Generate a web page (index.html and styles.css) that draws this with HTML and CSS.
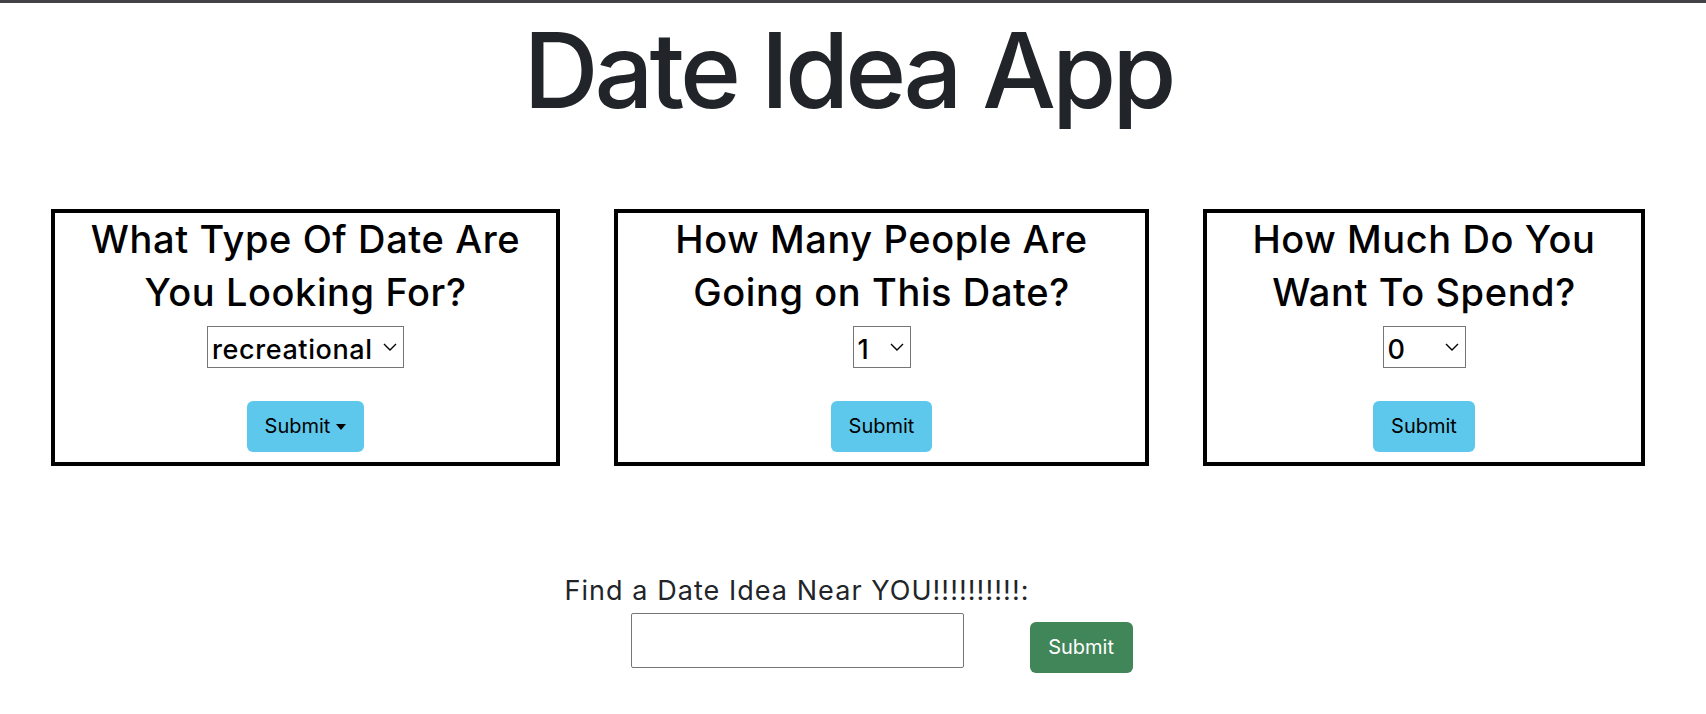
FILE: index.html
```html
<!DOCTYPE html>
<html lang="en">
<head>
<meta charset="utf-8">
<title>Date Idea App</title>
<link rel="stylesheet" href="styles.css">
</head>
<body>
<h1 class="title">Date Idea App</h1>

<div class="cards">
  <div class="card card--type">
    <h2 class="card__title">What Type Of Date Are<br>You Looking For?</h2>
    <span class="select-wrap">
      <select class="select select--type">
        <option>recreational</option>
      </select>
      <svg class="chevron" viewBox="0 0 14 8" width="14" height="8"><path d="M1 1l6 6 6-6" fill="none" stroke="#000" stroke-width="1.4"/></svg>
    </span>
    <button class="btn btn--info">Submit<span class="caret"></span></button>
  </div>

  <div class="card card--people">
    <h2 class="card__title">How Many People Are<br>Going on This Date?</h2>
    <span class="select-wrap">
      <select class="select select--people">
        <option>1</option>
      </select>
      <svg class="chevron" viewBox="0 0 14 8" width="14" height="8"><path d="M1 1l6 6 6-6" fill="none" stroke="#000" stroke-width="1.4"/></svg>
    </span>
    <button class="btn btn--info">Submit</button>
  </div>

  <div class="card card--budget">
    <h2 class="card__title">How Much Do You<br>Want To Spend?</h2>
    <span class="select-wrap">
      <select class="select select--budget">
        <option>0</option>
      </select>
      <svg class="chevron" viewBox="0 0 14 8" width="14" height="8"><path d="M1 1l6 6 6-6" fill="none" stroke="#000" stroke-width="1.4"/></svg>
    </span>
    <button class="btn btn--info">Submit</button>
  </div>
</div>

<form class="search">
  <div class="search__field">
    <label class="search__label" for="loc">Find a Date Idea Near YOU!!!!!!!!!!:</label>
    <input class="search__input" id="loc" type="text">
  </div>
  <button class="btn btn--success" type="button">Submit</button>
</form>
</body>
</html>
```

FILE: styles.css
```css
* { box-sizing: border-box; }

body {
  margin: 0;
  border-top: 3px solid #434345;
  font-family: Inter, "Noto Sans", sans-serif;
  background: #fff;
  color: #212529;
}

.title {
  margin: 5px 0 0;
  padding-right: 10px;
  text-align: center;
  font-size: 104px;
  line-height: 125px;
  font-weight: 500;
  letter-spacing: -4px;
  color: #212529;
}

.cards {
  display: flex;
  gap: 54px;
  padding-left: 51px;
  margin-top: 76px;
}

.card {
  border: 4px solid #000;
  display: flex;
  flex-direction: column;
  align-items: center;
  padding-bottom: 10px;
}

.card--type { width: 509px; }
.card--people { width: 535px; }
.card--budget { width: 442px; }

.card__title {
  margin: 0;
  font-size: 38px;
  line-height: 53px;
  font-weight: 500;
  letter-spacing: 0.6px;
  color: #000;
  text-align: center;
}

.select-wrap {
  position: relative;
  display: inline-block;
  margin-top: 7px;
}

.select {
  appearance: none;
  -webkit-appearance: none;
  display: block;
  height: 42px;
  border: 1px solid #767676;
  border-radius: 0;
  background: #fff;
  color: #000;
  font-family: Inter, "Noto Sans", sans-serif;
  font-size: 27px;
  font-weight: 500;
  letter-spacing: 0.6px;
  padding: 4px 0 0 4px;
  margin: 0;
}

.select--type { width: 197px; }
.select--people { width: 58px; }
.select--budget { width: 83px; }

.chevron {
  position: absolute;
  right: 7px;
  top: 17px;
  pointer-events: none;
}

.btn {
  margin-top: 33px;
  height: 51px;
  border: 0;
  border-radius: 6px;
  font-family: Inter, "Noto Sans", sans-serif;
  font-size: 20px;
  font-weight: 400;
  line-height: 51px;
  padding: 0 18px;
  display: inline-flex;
  align-items: center;
  cursor: pointer;
}

.btn--info {
  background: #5dc8ec;
  color: #000;
}

.caret {
  display: inline-block;
  margin-left: 6px;
  width: 0;
  height: 0;
  border-top: 6px solid #000;
  border-left: 5px solid transparent;
  border-right: 5px solid transparent;
}

.search {
  display: flex;
  justify-content: center;
  align-items: flex-start;
  margin-top: 105px;
  padding-right: 9px;
}

.search__field {
  display: flex;
  flex-direction: column;
  align-items: center;
}

.search__label {
  font-size: 27px;
  line-height: 39px;
  letter-spacing: 1.05px;
  color: #212529;
}

.search__input {
  margin-top: 3px;
  width: 333px;
  height: 55px;
  border: 1px solid #767676;
  border-radius: 2px;
  font-size: 20px;
  padding: 0 6px;
}

.btn--success {
  margin-top: 51px;
  width: 103px;
  justify-content: center;
  padding: 0;
  background: #408658;
  color: #fff;
}
```
